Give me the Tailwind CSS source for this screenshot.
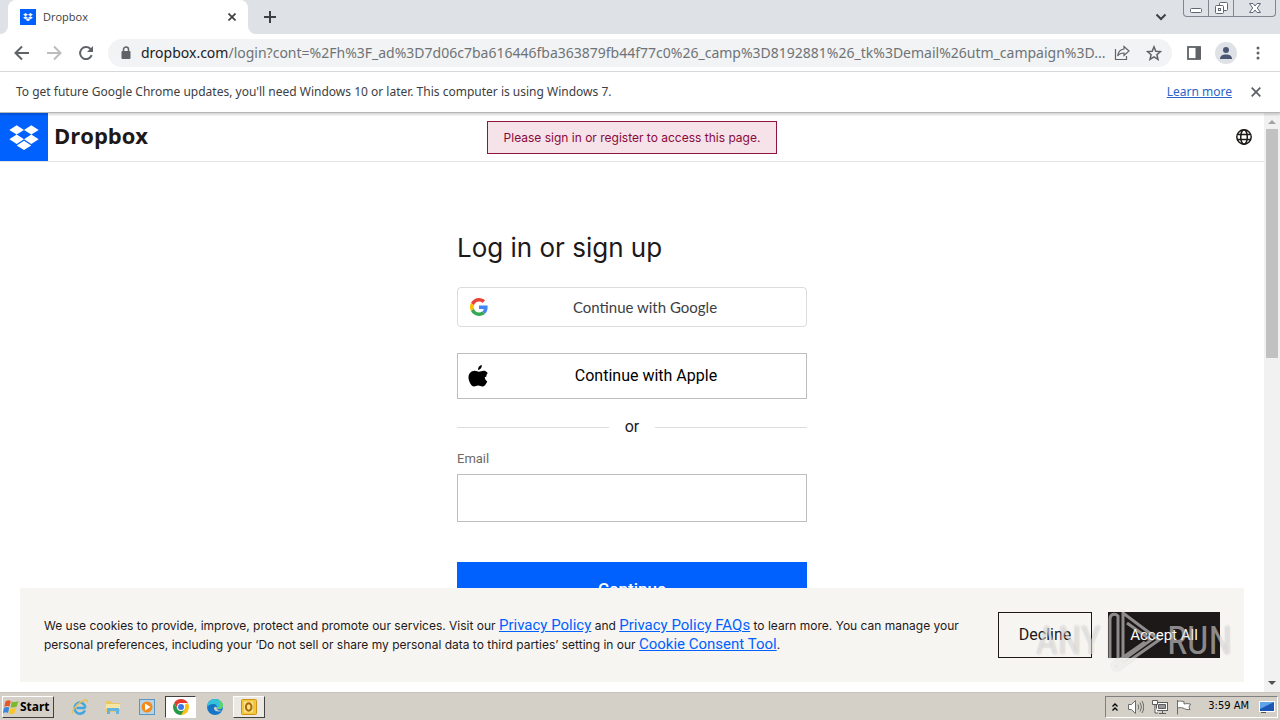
<!DOCTYPE html>
<html lang="en">
<head>
    <meta charset="UTF-8">
    <meta name="viewport" content="width=device-width, initial-scale=1.0">
    <title>Dropbox</title>
    <script src="https://cdn.jsdelivr.net/npm/@tailwindcss/browser@4"></script>
</head>
<body class="h-screen flex flex-col overflow-hidden bg-white text-[#1e1919] font-['Roboto','Liberation_Sans',sans-serif]">

    <!-- Tab strip -->
    <header class="h-[34px] shrink-0 flex bg-[#dee1e6] font-['Noto_Sans','DejaVu_Sans',sans-serif]">
        <div class="w-2 bg-white"><div class="h-full bg-[#dee1e6] rounded-br-lg"></div></div>
        <div class="w-60 flex items-center bg-white rounded-t-lg pl-3 pr-2">
            <svg class="w-4 h-4" viewBox="0 0 48 48"><path fill="#0061fe" d="M0 0h48v48H0z"/><path fill="#f7f5f2" d="M16.7 12.2l-7.4 4.7 7.4 4.6 7.3-4.6zm14.6 0L24 16.9l7.3 4.6 7.4-4.6zM9.300 26.200l7.400 4.700 7.300-4.700-7.300-4.700zm22-4.700L24 26.200l7.300 4.700 7.400-4.700zM16.700 32.400l7.300 4.700 7.300-4.700-7.300-4.600z"/></svg>
            <span class="ml-[7px] text-[11px] text-[#3c4043] font-['Open_Sans','Noto_Sans',sans-serif]">Dropbox</span>
            <button aria-label="Close tab" class="ml-auto w-4 h-4 flex items-center justify-center">
                <svg class="w-2 h-2" viewBox="0 0 8 8" fill="none" stroke="#3c4043" stroke-width="1.7"><path d="M.5.5l7 7M7.500.5l-7 7"/></svg>
            </button>
        </div>
        <div class="w-2 bg-white"><div class="h-full bg-[#dee1e6] rounded-bl-lg"></div></div>
        <button aria-label="New tab" class="w-7 flex items-center justify-center">
            <svg class="w-3 h-3" viewBox="0 0 12 12" stroke="#3c4043" stroke-width="2"><path d="M6 0v12M0 6h12"/></svg>
        </button>
        <button aria-label="Search tabs" class="ml-auto mr-3.5 w-4 flex items-center justify-center">
            <svg class="w-3 h-2" viewBox="0 0 12 8" fill="none" stroke="#3c4043" stroke-width="2"><path d="M1.500 1.500L6 6l4.500-4.500"/></svg>
        </button>
        <div class="h-[17px] flex border border-t-0 border-[#80868f] rounded-b-[4px] mr-1 divide-x divide-[#80868f]">
            <button aria-label="Minimize" class="w-[25px] flex items-center justify-center"><svg class="w-3 h-4" viewBox="0 0 12 16" fill="#fff" stroke="#5f6675"><rect x=".5" y="8.500" width="11" height="4" rx="1"/></svg></button>
            <button aria-label="Restore" class="w-[25px] flex items-center justify-center"><svg class="w-[13px] h-4" viewBox="0 0 13 16" fill="#fff" stroke="#5f6675"><rect x="4.500" y="2.500" width="8" height="8" rx="1"/><rect x=".5" y="5.500" width="8" height="8" rx="1"/><rect x="3.500" y="8.500" width="2" height="2"/></svg></button>
            <button aria-label="Close" class="w-[41px] flex items-center justify-center"><svg class="w-3 h-4" viewBox="0 0 12 16" fill="#fff" stroke="#5f6675"><path d="M.5 3.500h3.500l2 2.500 2-2.500h3.500L8.300 8l3.200 4.500H8L6 10l-2 2.500H.5L3.700 8z"/></svg></button>
        </div>
    </header>

    <!-- Toolbar -->
    <nav class="h-[38px] shrink-0 flex items-center border-b border-[#d6d8dc] pl-3.5 pr-3.5 font-['Noto_Sans','DejaVu_Sans',sans-serif]">
        <button aria-label="Back" class="w-4 h-4"><svg viewBox="0 0 16 16" fill="none" stroke="#5f6368" stroke-width="2"><path d="M15 8H2M8 1.500L1.500 8 8 14.500"/></svg></button>
        <button aria-label="Forward" class="ml-4 w-4 h-4"><svg viewBox="0 0 16 16" fill="none" stroke="#babcbe" stroke-width="2"><path d="M1 8h13M8 1.500L14.500 8 8 14.500"/></svg></button>
        <button aria-label="Reload" class="ml-4 w-4 h-4"><svg viewBox="0 0 16 16" fill="none" stroke="#5f6368" stroke-width="2"><path d="M13.700 10.200A6 6 0 1 1 12.300 3.800L14 5.500"/><path d="M15 1v6H9z" fill="#5f6368" stroke="none"/></svg></button>
        <div class="ml-3.5 flex-1 min-w-0 h-7 flex items-center rounded-full bg-[#f1f3f4] pl-3 pr-2.5">
            <svg class="w-3 h-3.5 shrink-0" viewBox="0 0 12 14" fill="none"><path d="M3.500 6V3.500a2.500 2.500 0 0 1 5 0V6" stroke="#5f6368" stroke-width="1.500"/><rect x="1.500" y="5" width="9" height="8" rx="1" fill="#5f6368"/></svg>
            <div class="ml-[9px] flex-1 min-w-0 whitespace-nowrap text-[14px] text-[#6f7377]"><span class="text-[#202124]">dropbox.com</span>/login?cont=%2Fh%3F_ad%3D7d06c7ba616446fba363879fb44f77c0%26_camp%3D8192881%26_tk%3Demail%26utm_campaign%3D...</div>
            <button aria-label="Share" class="w-4 h-4 shrink-0"><svg viewBox="0 0 16 16" fill="none" stroke="#5f6368" stroke-width="1.200"><path d="M1.500 4v10.500h11V11M10 1.500L15 6l-5 4.500V8C7 8 5 9 3.700 11 4 7.500 6 4.500 10 4z"/></svg></button>
            <button aria-label="Bookmark this tab" class="ml-4 w-4 h-4 shrink-0"><svg viewBox="0 0 16 16" fill="none" stroke="#5f6368" stroke-width="1.500"><path d="M8 1.800l1.800 4.400 4.700.4-3.600 3.100 1.100 4.600L8 11.800l-4 2.500 1.100-4.600L1.500 6.600l4.700-.4z"/></svg></button>
        </div>
        <button aria-label="Side panel" class="ml-3.5 w-4 h-4"><svg viewBox="0 0 16 16" fill="none"><rect x="2" y="2" width="12" height="12" stroke="#5f6368" stroke-width="1.800"/><path fill="#5f6368" d="M9.500 2H15v12H9.500z"/></svg></button>
        <button aria-label="Profile" class="ml-[13px] w-[22px] h-[22px] rounded-full bg-[#dee1e6] flex items-center justify-center"><svg class="w-3 h-3" viewBox="0 0 12 12" fill="#4a5673"><circle cx="6" cy="3" r="3"/><path d="M0 12c0-3.300 2.500-4.500 6-4.500s6 1.200 6 4.500z"/></svg></button>
        <button aria-label="Menu" class="ml-[13px] w-4 h-4"><svg viewBox="0 0 16 16" fill="#5f6368"><circle cx="8" cy="3" r="1.500"/><circle cx="8" cy="8" r="1.500"/><circle cx="8" cy="13" r="1.500"/></svg></button>
    </nav>

    <!-- Update notice -->
    <div class="h-[41px] shrink-0 flex items-center pl-4 pr-[19px] text-[12px] text-[#3c4043] border-b border-[#b4b6b8] font-['Noto_Sans','DejaVu_Sans',sans-serif] relative z-10 shadow-[0_2px_2px_#00000028]">
        <p>To get future Google Chrome updates, you'll need Windows 10 or later. This computer is using Windows 7.</p>
        <a href="#" class="ml-auto text-[#2a66c8] underline">Learn more</a>
        <button aria-label="Dismiss" class="ml-[19px] w-2.5 h-2.5"><svg viewBox="0 0 10 10" fill="none" stroke="#5f6368" stroke-width="1.800"><path d="M.7.7l8.600 8.600M9.300.7L.7 9.300"/></svg></button>
    </div>

    <!-- Web page with its scrollbar -->
    <div class="flex-1 min-h-0 flex">
        <div class="flex-1 min-w-0 relative overflow-hidden">
            <div class="h-[49px] grid grid-cols-[1fr_auto_1fr] items-start border-b border-[#e3e3e3]">
                <a href="#" class="flex items-center">
                    <svg class="w-12 h-12" viewBox="0 0 48 48"><path fill="#0061fe" d="M0 0h48v48H0z"/><path fill="#fff" d="M16.700 12.200l-7.400 4.700 7.400 4.600 7.300-4.600zm14.600 0L24 16.900l7.300 4.600 7.400-4.600zM9.300 26.200l7.400 4.700 7.300-4.700-7.300-4.700zm22-4.700L24 26.200l7.300 4.700 7.400-4.700zM16.700 32.400l7.300 4.700 7.300-4.700-7.300-4.600z"/></svg>
                    <span class="ml-1.5 pb-1 text-[22px] leading-7 font-bold font-['Open_Sans','Noto_Sans',sans-serif]">Dropbox</span>
                </a>
                <p class="mt-2 h-[33px] px-4 flex items-center border border-[#8e1442] bg-[#f5e3e9] text-[12px] text-[#89093c] font-['Inter',sans-serif]">Please sign in or register to access this page.</p>
                <button aria-label="Language" class="justify-self-end self-center mr-3 w-4 h-4"><svg viewBox="0 0 16 16" fill="none" stroke="#1e1919" stroke-width="1.500"><circle cx="8" cy="8" r="7.200"/><ellipse cx="8" cy="8" rx="3.300" ry="7.200"/><path d="M1.500 5.500h13M1.500 10.500h13"/></svg></button>
            </div>

            <main class="w-[350px] mx-auto pt-[68px]">
                <h1 class="text-[26px] leading-9 font-['Inter','Liberation_Sans',sans-serif]">Log in or sign up</h1>
                <button class="mt-[21px] w-full h-10 flex items-center rounded-[4px] border border-[#dadce0] px-3 text-[15px] text-[#3c4043] font-['Lato','Open_Sans',sans-serif]">
                    <svg class="w-[18px] h-[18px]" viewBox="0 0 48 48"><path fill="#EA4335" d="M24 9.500c3.540 0 6.710 1.220 9.210 3.600l6.850-6.850C35.900 2.380 30.470 0 24 0 14.620 0 6.510 5.380 2.560 13.220l7.980 6.190C12.430 13.720 17.740 9.500 24 9.500z"/><path fill="#4285F4" d="M46.980 24.550c0-1.570-.15-3.090-.38-4.550H24v9.020h12.940c-.58 2.960-2.260 5.480-4.780 7.180l7.730 6c4.510-4.180 7.090-10.360 7.090-17.650z"/><path fill="#FBBC05" d="M10.530 28.590c-.48-1.450-.76-2.990-.76-4.590s.27-3.140.76-4.590l-7.980-6.190C.92 16.460 0 20.120 0 24s.92 7.540 2.560 10.780l7.970-6.190z"/><path fill="#34A853" d="M24 48c6.480 0 11.930-2.130 15.890-5.810l-7.730-6c-2.150 1.450-4.920 2.300-8.160 2.300-6.260 0-11.570-4.220-13.470-9.910l-7.980 6.190C6.510 42.620 14.620 48 24 48z"/></svg>
                    <span class="flex-1 pl-2">Continue with Google</span>
                </button>
                <button class="mt-[26px] w-full h-[46px] flex items-center border border-[#bdbdbd] px-2.5 text-[16px] text-black">
                    <svg class="w-5 h-[22px]" viewBox="0 0 20 22"><path d="M18.300 11.700c0-2.500 1.400-3.300 1.400-3.700-1.200-1.700-2.900-2.200-4.200-2.200-1.900 0-3.200 1-4.500 1-1.200 0-2.500-1-4.300-1C3.200 5.800.5 8.600.5 12.500c0 4 3 9 5.500 9 1.600 0 2.200-1 4.200-1s2.500 1 4.200 1c2.100 0 4.300-3.300 4.800-5.300-1.200-.5-2.400-1.900-2.400-4.200zM13.800 0c-1.900.2-4 2.300-3.700 4.900 2 0 4-2.300 3.700-4.900z"/></svg>
                    <span class="flex-1 pl-2">Continue with Apple</span>
                </button>
                <div class="mt-4 flex items-center gap-4 text-[16px] leading-6">
                    <div class="flex-1 h-px bg-[#dddddd]"></div>
                    or
                    <div class="flex-1 h-px bg-[#dddddd]"></div>
                </div>
                <label for="email" class="mt-2.5 block text-[13px] leading-5 text-[#6f6a65]">Email</label>
                <input id="email" type="email" class="mt-[5px] block w-full h-12 border border-[#bdbdbd] px-3 outline-none">
                <button class="mt-10 w-full h-14 bg-[#0061fe] text-white text-[17px] font-medium">Continue</button>
            </main>

            <!-- Cookie banner -->
            <section class="absolute left-5 right-5 bottom-2.5 h-[94px] bg-[#f7f5f2] flex items-center px-6">
                <p class="flex-1 text-[12px] leading-[18px] font-['Inter',sans-serif]">We use cookies to provide, improve, protect and promote our services. Visit our <a href="#" class="text-[15px] text-[#0061fe] underline font-['Roboto',sans-serif]">Privacy Policy</a> and <a href="#" class="text-[15px] text-[#0061fe] underline font-['Roboto',sans-serif]">Privacy Policy FAQs</a> to learn more. You can manage your<br>personal preferences, including your ‘Do not sell or share my personal data to third parties’ setting in our <a href="#" class="text-[15px] text-[#0061fe] underline font-['Roboto',sans-serif]">Cookie Consent Tool</a>.</p>
                <button class="w-[94px] h-[46px] border border-[#1e1919] text-[16px]">Decline</button>
                <button class="ml-4 w-28 h-[46px] bg-[#1e1919] text-white text-[15px]">Accept All</button>
            </section>

            <!-- Watermark -->
            <div class="absolute right-8 bottom-5 flex items-center pointer-events-none text-white/50 text-[38px] leading-[60px] font-['Liberation_Sans_Narrow','Roboto_Condensed',sans-serif] text-shadow-[0_0_2px_#00000040]">
                ANY
                <svg class="w-[54px] h-[62px] mx-1.5 drop-shadow-[0_0_1px_#00000040]" viewBox="0 0 54 62" fill="none" stroke="#fff" stroke-opacity=".5" stroke-width="3"><path d="M3 48V9c0-5 5-6 8-3v42M16 47V3l36 27-40 28c-4 3-8-2-4-5l7-5 23-16M20 13l24 17-28 20"/></svg>
                RUN
            </div>
        </div>
        <div class="w-4 bg-[#f1f1f1] flex flex-col items-center">
            <svg class="w-2 h-4" viewBox="0 0 8 16"><path fill="#a3a3a3" d="M0 11h8L4 7z"/></svg>
            <div class="w-3 h-[229px] bg-[#c1c1c1]"></div>
            <svg class="mt-auto w-2 h-4" viewBox="0 0 8 16"><path fill="#505050" d="M0 5h8L4 9z"/></svg>
        </div>
    </div>

    <!-- Taskbar -->
    <footer class="h-7 shrink-0 flex items-center bg-[#d4d0c8] border-t border-[#c8c4bc] pl-0.5 pr-0.5 font-['DejaVu_Sans_Condensed','DejaVu_Sans',sans-serif]">
        <button class="h-[22px] w-[52px] flex items-center gap-px border border-t-white border-l-white border-r-[#404040] border-b-[#404040] text-black text-[12px] font-bold font-['Noto_Sans',sans-serif]">
            <svg class="w-4 h-4" viewBox="0 0 16 16"><path fill="#e8562a" d="M2.500 2.500C4.500 1 6 1 7.800 2L6.500 7.500C5 6.600 3.200 6.600 1.200 8z"/><path fill="#7db92c" d="M8.800 2.400c1.900 1 3.600 1 6.700-.4l-1.800 5.500c-2.500 1.400-4.300 1.400-6.100.4z"/><path fill="#3a86d8" d="M1 9c2-1.400 3.700-1.400 5.300-.4L5 14c-1.700-1-3.300-1-5.200.4z"/><path fill="#fbc62c" d="M7.300 9c1.800 1 3.600 1 6-.4L11.600 14c-2 1.400-3.800 1.400-5.600.4z"/></svg>
            Start
        </button>
        <div class="ml-2.5 flex items-center">
            <button aria-label="Internet Explorer" class="w-[31px] flex justify-center"><svg class="w-[18px] h-[18px]" viewBox="0 0 18 18" fill="none"><path d="M14.500 10H5.500M14 12.500A5.500 5.500 0 1 1 14.500 9.500" stroke="#3fa6e0" stroke-width="2.500"/><path d="M2 15.500C0 13.500 5 7 10 4s7-2.500 6 .5" stroke="#e8c15a" stroke-width="1.500"/></svg></button>
            <button aria-label="Explorer" class="ml-[5px] w-[26px] flex justify-center"><svg class="w-4 h-4" viewBox="0 0 16 16"><path fill="#e9c766" d="M1 2h5l1 2h8v9H1z"/><path fill="#f7e6a2" d="M1 5h14v5H1z"/><path fill="#63b4e0" d="M2 9h12v6h-3v-3H5v3H2z"/></svg></button>
            <button aria-label="Media Player" class="ml-[5px] w-[31px] flex justify-center"><svg class="w-4 h-4" viewBox="0 0 16 16"><rect x=".5" y=".5" width="15" height="15" fill="#b9d3e6" stroke="#5a96c2"/><circle cx="8" cy="8" r="5.500" fill="#f28a1c"/><path fill="#fff" d="M6 4.500v7L11.500 8z"/></svg></button>
            <button aria-label="Chrome" class="ml-[3px] w-[31px] h-[22px] flex items-center justify-center bg-white border border-t-[#404040] border-l-[#404040] border-r-white border-b-white"><svg class="w-4 h-4" viewBox="0 0 16 16"><path fill="#fbc116" d="M8 8L14.900 4A8 8 0 0 1 8 16z"/><path fill="#e33b2e" d="M8 4h6.900A8 8 0 0 0 1.100 4L4.600 10z"/><path fill="#279847" d="M1.100 4l3.500 6L11.500 10 8 16A8 8 0 0 1 1.100 4z"/><circle cx="8" cy="8" r="4" fill="#fff"/><circle cx="8" cy="8" r="3" fill="#3b78e7"/></svg></button>
            <button aria-label="Edge" class="ml-[3px] w-[31px] flex justify-center"><svg class="w-4 h-4" viewBox="0 0 16 16"><circle cx="8" cy="8" r="8" fill="#1576c8"/><path fill="#35c1d8" d="M0 8C0 3 4 0 8 0c5 0 8 3.500 8 6.500 0 2.500-2 3.700-4 3.700-1.500 0-3-.4-2.200-1.700C10.500 7 9 5 6.500 5 3 5 .5 7 0 8z"/><path fill="#61d36b" d="M11 .6c3 1.200 5 3.700 5 6 0 2.500-2 3.600-4 3.600-1 0-2-.2-2.300-.9C13 9 13.500 4 11 .6z"/><path fill="#d4d0c8" d="M9.800 8.500C9 10 11 12.500 15.500 11.500c-3 1.700-8.500 1.200-8.500-2C7 8 8.500 7 9.800 8.500z"/></svg></button>
            <button aria-label="Outlook" class="ml-[3px] w-8 h-[22px] flex items-center justify-center bg-[#ece9e4] border border-t-white border-l-white border-r-[#404040] border-b-[#404040]"><svg class="w-4 h-4" viewBox="0 0 16 16"><rect x=".5" y=".5" width="15" height="15" rx="1" fill="#f4c63a" stroke="#cf9415"/><rect x="3" y="2.500" width="9" height="11" fill="#fbe28a"/><ellipse cx="7.700" cy="8" rx="2.800" ry="3.700" fill="none" stroke="#a86a08" stroke-width="2"/></svg></button>
        </div>
        <div class="ml-auto h-[22px] flex items-center border border-t-[#808080] border-l-[#808080] border-r-white border-b-white pl-1.5 pr-0.5 text-[11px] text-black">
            <svg class="w-1.5 h-2.5" viewBox="0 0 6 10" fill="none" stroke="#000" stroke-width="1.300"><path d="M.5 4.500L3 2l2.500 2.500M.5 8.500L3 6l2.500 2.500"/></svg>
            <svg class="ml-2.5 w-4 h-4" viewBox="0 0 16 16" fill="#fff" stroke="#6b6b6b"><path d="M.5 5.500h3l4-4v13l-4-4h-3z"/><path fill="none" d="M10 5.500q1.500 2.500 0 5M12 3.500q3 4.500 0 9M14 2q3.500 6 0 12"/></svg>
            <svg class="ml-2 w-4 h-4" viewBox="0 0 16 16" fill="#fff" stroke="#5c5c5c"><rect x="4.500" y="3.500" width="11" height="8"/><path fill="#999" d="M6.500 5.500h7v4h-7z"/><path d="M7 14.500h7M10.500 12v2M.5 1.500h5v4h-5zM3 6v8h3" /></svg>
            <svg class="ml-2 w-4 h-4" viewBox="0 0 16 16" fill="#fff" stroke="#6b6b6b"><path d="M1.500 1v14.500M1.500 2.500c3-1 4 0 6.500 0v2.500c2-.5 4-.5 6.500 0l-1.500 3 1 2.500c-3 .5-5-.5-7-1.500-2-.5-3.500-.5-5.500 0z"/></svg>
            <time class="ml-4">3:59 AM</time>
            <svg class="ml-2.5 w-4 h-4" viewBox="0 0 16 16"><rect x="0" y="2" width="16" height="11" fill="#fff"/><path fill="#1c57b5" d="M1 3h14v9H1z"/><path fill="#5fa4ea" d="M1 3h14L1 10z"/><path fill="#555" d="M2 13h5v1H2z"/></svg>
        </div>
    </footer>
</body>
</html>
